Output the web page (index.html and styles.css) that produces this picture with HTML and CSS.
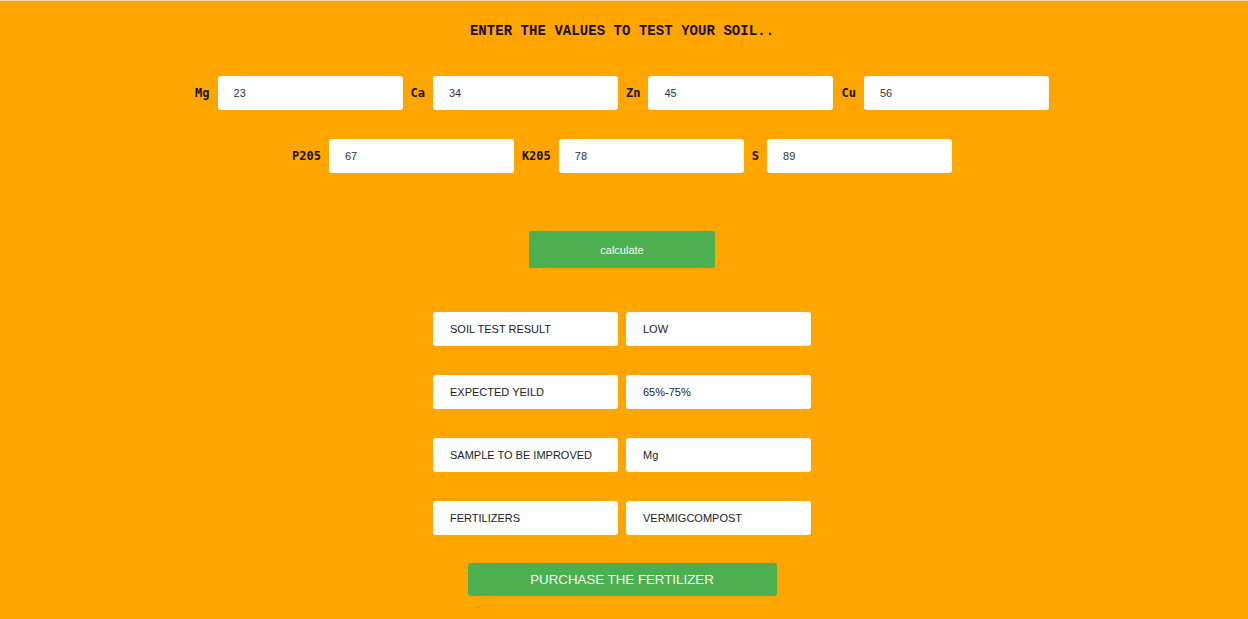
FILE: index.html
```html
<!DOCTYPE html>
<html>
<head>
<meta charset="utf-8">
<title>Soil Test</title>
<link rel="stylesheet" href="styles.css">
</head>
<body>
<div class="page">
  <h1 class="title">ENTER THE VALUES TO TEST YOUR SOIL..</h1>
  <div class="row row-first">
    <label class="lbl">Mg</label><input class="field" value="23">
    <label class="lbl">Ca</label><input class="field" value="34">
    <label class="lbl">Zn</label><input class="field" value="45">
    <label class="lbl">Cu</label><input class="field" value="56">
  </div>
  <div class="row row-second">
    <label class="lbl">P205</label><input class="field" value="67">
    <label class="lbl">K205</label><input class="field" value="78">
    <label class="lbl">S</label><input class="field" value="89">
  </div>
  <div class="row row-calc">
    <button class="btn-calc">calculate</button>
  </div>
  <div class="results">
    <div class="res-row"><div class="box">SOIL TEST RESULT</div><div class="box">LOW</div></div>
    <div class="res-row"><div class="box">EXPECTED YEILD</div><div class="box">65%-75%</div></div>
    <div class="res-row"><div class="box">SAMPLE TO BE IMPROVED</div><div class="box">Mg</div></div>
    <div class="res-row"><div class="box">FERTILIZERS</div><div class="box">VERMIGCOMPOST</div></div>
  </div>
  <div class="row row-buy">
    <button class="btn-buy">PURCHASE THE FERTILIZER</button>
  </div>
</div>
</body>
</html>
```
FILE: styles.css
```css
html, body {
  margin: 0;
  padding: 0;
  background: #FFA500;
}
body {
  border-top: 1px solid #f2dcb4;
  height: 618px;
  overflow: hidden;
}
.page {
  display: flex;
  flex-direction: column;
  align-items: center;
  padding-right: 4px;
}
.title {
  margin: 21px 0 0 0;
  font-family: "Liberation Mono", "DejaVu Sans Mono", monospace;
  font-weight: bold;
  font-size: 14px;
  line-height: 18px;
  color: #1a1000;
  letter-spacing: 0.05px;
}
.row {
  display: flex;
  align-items: center;
  gap: 8px;
}
.row-first { margin-top: 36px; }
.row-second { margin-top: 29px; }
.row-calc { margin-top: 58px; }
.row-buy { margin-top: 28px; }
.lbl {
  font-family: "DejaVu Sans Mono", "Liberation Mono", monospace;
  font-weight: bold;
  font-size: 12px;
  color: #1a1000;
}
.field {
  box-sizing: border-box;
  width: 185px;
  height: 34px;
  border: none;
  border-radius: 3px;
  background: #fff;
  padding: 0 0 0 16px;
  font-family: "Liberation Sans", Arial, sans-serif;
  font-size: 11px;
  color: #333;
  outline: none;
}
.btn-calc {
  width: 186px;
  height: 37px;
  border: none;
  border-radius: 2px;
  background: #4CAF50;
  color: #f4fff4;
  font-family: "Liberation Sans", Arial, sans-serif;
  font-size: 11px;
}
.results {
  display: flex;
  flex-direction: column;
  gap: 29px;
  margin-top: 44px;
}
.res-row {
  display: flex;
  gap: 8px;
}
.box {
  box-sizing: border-box;
  width: 185px;
  height: 34px;
  background: #fff;
  border-radius: 3px;
  padding-left: 17px;
  display: flex;
  align-items: center;
  font-family: "Liberation Sans", Arial, sans-serif;
  font-size: 11px;
  color: #222;
}
.btn-buy {
  width: 309px;
  height: 33px;
  border: none;
  border-radius: 3px;
  background: #4CAF50;
  color: #f4fff4;
  font-family: "Liberation Sans", Arial, sans-serif;
  font-size: 13.3px;
}
```
